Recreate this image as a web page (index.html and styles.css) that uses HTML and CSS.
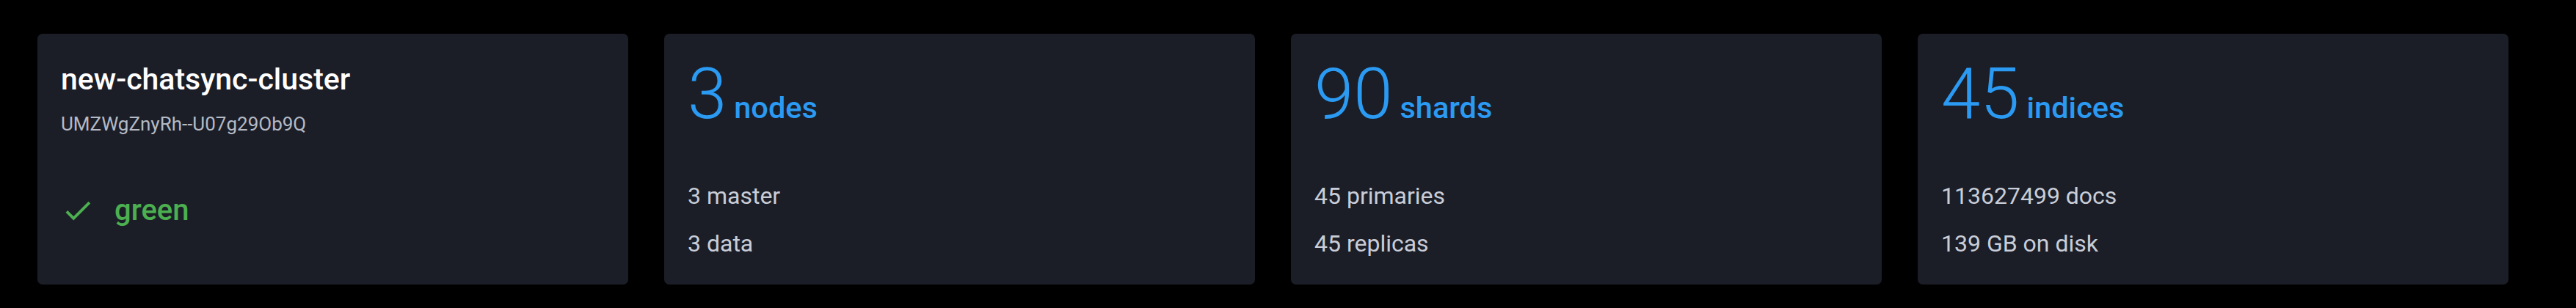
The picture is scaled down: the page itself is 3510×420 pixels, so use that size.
FILE: index.html
```html
<!DOCTYPE html>
<html lang="en">
<head>
<meta charset="utf-8">
<title>Cluster overview</title>
<link rel="stylesheet" href="styles.css">
</head>
<body>
<main class="overview">
  <section class="card">
    <h1 class="cluster-name">new-chatsync-cluster</h1>
    <div class="cluster-id">UMZWgZnyRh--U07g29Ob9Q</div>
    <div class="status">
      <svg class="status-icon" viewBox="0 0 24 24" aria-hidden="true"><path d="M9 16.17L4.83 12l-1.42 1.41L9 19 21 7l-1.41-1.41z"/></svg>
      <span class="status-text">green</span>
    </div>
  </section>
  <section class="card">
    <div class="stat"><span class="stat-value">3</span><span class="stat-unit">nodes</span></div>
    <div class="details">
      <div class="detail">3 master</div>
      <div class="detail">3 data</div>
    </div>
  </section>
  <section class="card">
    <div class="stat"><span class="stat-value">90</span><span class="stat-unit">shards</span></div>
    <div class="details">
      <div class="detail">45 primaries</div>
      <div class="detail">45 replicas</div>
    </div>
  </section>
  <section class="card">
    <div class="stat"><span class="stat-value">45</span><span class="stat-unit">indices</span></div>
    <div class="details">
      <div class="detail">113627499 docs</div>
      <div class="detail">139 GB on disk</div>
    </div>
  </section>
</main>
</body>
</html>
```

FILE: styles.css
```css
html, body {
  margin: 0;
  padding: 0;
  background: #000000;
}

body {
  font-family: Roboto, "Liberation Sans", Arial, sans-serif;
  width: 3510px;
  height: 420px;
  overflow: hidden;
}

.overview {
  display: grid;
  grid-template-columns: repeat(4, 805px);
  column-gap: 49px;
  padding: 46px 0 0 51px;
}

.card {
  box-sizing: border-box;
  height: 342px;
  background: #1b1e27;
  border-radius: 7px;
  padding: 34px 32px 0 32px;
  display: flex;
  flex-direction: column;
}

.cluster-name {
  margin: 0;
  font-size: 41px;
  line-height: 56px;
  font-weight: 500;
  color: #ffffff;
}

.cluster-id {
  margin-top: 13px;
  font-size: 26px;
  line-height: 40px;
  color: #b5bac5;
}

.status {
  margin-top: 75px;
  display: flex;
  align-items: center;
  height: 46px;
}

.status-icon {
  width: 46px;
  height: 46px;
  fill: #4caf50;
  margin-right: 27px;
  flex: none;
}

.status-text {
  font-size: 40px;
  line-height: 46px;
  font-weight: 500;
  color: #4caf50;
}

.stat {
  display: flex;
  align-items: baseline;
  color: #2b9af3;
}

.stat-value {
  font-size: 96px;
  line-height: 96px;
  font-weight: 300;
}

.stat-unit {
  margin-left: 10px;
  font-size: 41.5px;
  font-weight: 500;
}

.details {
  margin-top: 59px;
  display: flex;
  flex-direction: column;
}

.detail {
  font-size: 32px;
  line-height: 65px;
  color: #c9cdd7;
}
```
